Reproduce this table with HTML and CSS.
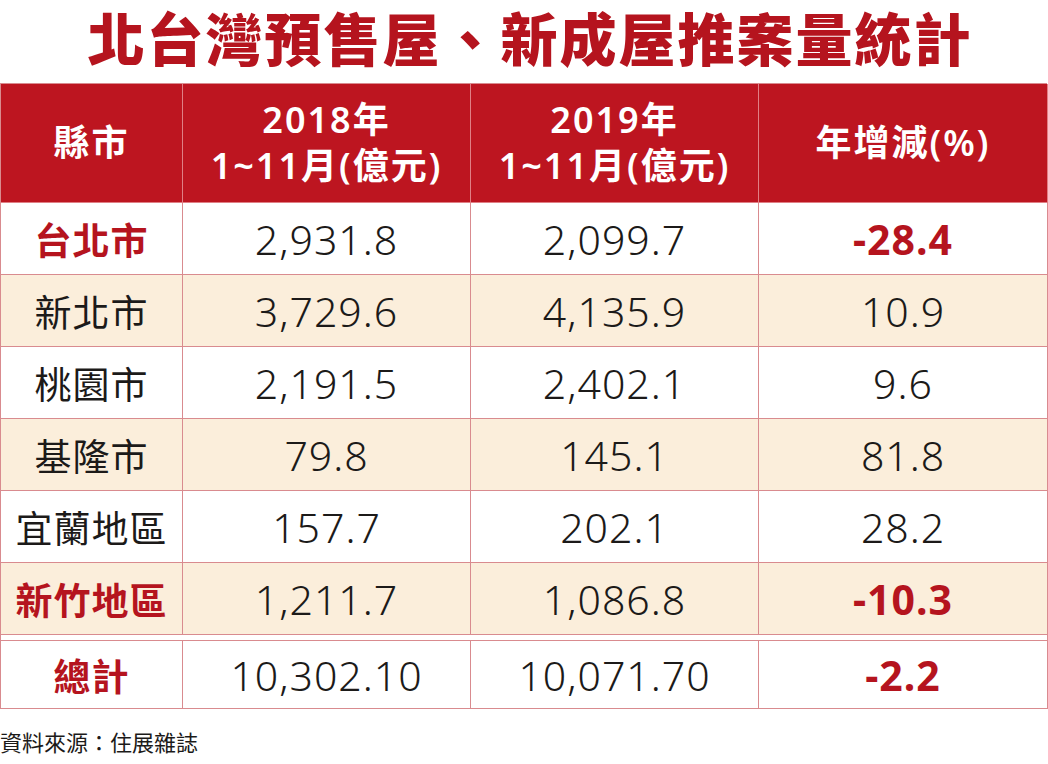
FILE: index.html
```html
<!DOCTYPE html>
<html lang="zh-Hant">
<head>
<meta charset="utf-8">
<title>北台灣預售屋、新成屋推案量統計</title>
<link rel="stylesheet" href="styles.css">
</head>
<body>
<h1 class="title">北台灣預售屋、新成屋推案量統計</h1>
<div class="table">
  <div class="cell head">縣市</div>
  <div class="cell head"><span>2018年</span><span>1~11月(億元)</span></div>
  <div class="cell head"><span>2019年</span><span>1~11月(億元)</span></div>
  <div class="cell head">年增減(%)</div>

  <div class="cell name red">台北市</div>
  <div class="cell num">2,931.8</div>
  <div class="cell num">2,099.7</div>
  <div class="cell num red">-28.4</div>

  <div class="cell name alt">新北市</div>
  <div class="cell num alt">3,729.6</div>
  <div class="cell num alt">4,135.9</div>
  <div class="cell num alt">10.9</div>

  <div class="cell name">桃園市</div>
  <div class="cell num">2,191.5</div>
  <div class="cell num">2,402.1</div>
  <div class="cell num">9.6</div>

  <div class="cell name alt">基隆市</div>
  <div class="cell num alt">79.8</div>
  <div class="cell num alt">145.1</div>
  <div class="cell num alt">81.8</div>

  <div class="cell name">宜蘭地區</div>
  <div class="cell num">157.7</div>
  <div class="cell num">202.1</div>
  <div class="cell num">28.2</div>

  <div class="cell name alt red">新竹地區</div>
  <div class="cell num alt">1,211.7</div>
  <div class="cell num alt">1,086.8</div>
  <div class="cell num alt red">-10.3</div>

  <div class="spacer"></div>

  <div class="cell name red total">總計</div>
  <div class="cell num total">10,302.10</div>
  <div class="cell num total">10,071.70</div>
  <div class="cell num red total">-2.2</div>
</div>
<p class="source">資料來源：住展雜誌</p>
</body>
</html>
```

FILE: styles.css
```css
* { box-sizing: border-box; }

body {
  margin: 0;
  background: #ffffff;
  font-family: "Noto Sans", "Noto Sans CJK TC", sans-serif;
  color: #1c1a19;
}

.title {
  margin: 0;
  padding: 0 0 5px 12px;
  text-align: center;
  font-family: "Noto Sans", "Noto Sans CJK TC", sans-serif;
  font-weight: 900;
  font-size: 57px;
  line-height: 78px;
  letter-spacing: 2px;
  color: #b5141e;
}

.table {
  display: grid;
  grid-template-columns: 182px 288px 288px 289px;
  border-top: 1px solid #d98b8f;
  border-left: 1px solid #d98b8f;
  width: 1047px;
}

.cell {
  display: flex;
  align-items: center;
  justify-content: center;
  height: 72px;
  border-right: 1px solid #d98b8f;
  border-bottom: 1px solid #d98b8f;
  background: #ffffff;
}

.head {
  height: 119px;
  flex-direction: column;
  background: #bd1520;
  color: #ffffff;
  font-family: "Noto Sans", "Noto Sans CJK TC", sans-serif;
  font-weight: 600;
  font-size: 36px;
  line-height: 46px;
  letter-spacing: 2px;
  border-right-color: #e07f85;
  border-bottom-color: #e07f85;
}

.name {
  font-family: "Noto Sans CJK TC", sans-serif;
  font-size: 37px;
  font-weight: 400;
  letter-spacing: 1px;
}

.num {
  font-size: 41px;
  font-weight: 300;
  letter-spacing: 1px;
}

.alt { background: #fbeedb; }

.red {
  color: #b5141e;
  font-weight: 700;
}

.spacer {
  grid-column: 1 / -1;
  height: 6px;
  border-right: 1px solid #d98b8f;
  border-bottom: 1px solid #d98b8f;
}

.total { height: 68px; }

.source {
  margin: 17px 0 0 0;
  font-family: "Noto Sans CJK TC", sans-serif;
  font-size: 22px;
  line-height: 30px;
  color: #1c1a19;
}
```
